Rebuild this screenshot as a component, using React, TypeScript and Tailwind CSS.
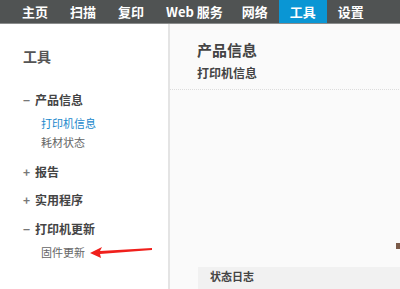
import React from 'react';

const tabs = ['主页', '扫描', '复印', 'Web 服务', '网络', '工具', '设置'];

const font = { fontFamily: '"Noto Sans CJK SC", "Noto Sans", sans-serif' };

export default function App() {
  return (
    <div className="w-[400px] h-[289px] overflow-hidden bg-white" style={font}>
      {/* top nav */}
      <div className="flex h-[24px] bg-[#505353] border-b border-[#8a8c8c] pl-[11px]">
        {tabs.map(t => (
          <div
            key={t}
            className={`flex items-center text-[13px] font-bold text-white leading-none ${
              t === 'Web 服务' ? 'pl-[11px] pr-[8px]' : 'px-[11px]'
            } ${t === '工具' ? 'bg-[#0a96d4]' : ''}`}
          >
            {t}
          </div>
        ))}
      </div>

      <div className="flex h-[265px]">
        {/* sidebar */}
        <div className="w-[170px] shrink-0 bg-white border-r-2 border-[#e4e4e4] pl-[23px] pt-[25px]">
          <div className="text-[14px] font-bold text-[#555] leading-none">工具</div>

          <div className="mt-[31px] flex items-center gap-[4px] text-[12px] font-bold text-[#444] leading-none">
            <span className="w-[8px] text-[#777]">−</span>产品信息
          </div>
          <div className="pl-[18px] mt-[12px] text-[11px] text-[#1a88cc] leading-none">打印机信息</div>
          <div className="pl-[18px] mt-[8px] text-[11px] text-[#666] leading-none">耗材状态</div>

          <div className="mt-[18px] flex items-center gap-[4px] text-[12px] font-bold text-[#444] leading-none">
            <span className="w-[8px] text-[#777]">+</span>报告
          </div>
          <div className="mt-[16px] flex items-center gap-[4px] text-[12px] font-bold text-[#444] leading-none">
            <span className="w-[8px] text-[#777]">+</span>实用程序
          </div>
          <div className="mt-[17px] flex items-center gap-[4px] text-[12px] font-bold text-[#444] leading-none">
            <span className="w-[8px] text-[#777]">−</span>打印机更新
          </div>
          <div className="pl-[18px] mt-[10px] flex items-center text-[11px] text-[#666] leading-none">
            固件更新
            <svg width="66" height="14" viewBox="0 0 66 14" className="ml-[3px]">
              <path d="M2 8 L14 2 L12 6 L64 3 L64 5 L12 9 L13 13 Z" fill="#f0201c" />
            </svg>
          </div>
        </div>

        {/* main */}
        <div className="flex-1 bg-[#fafafa] flex flex-col">
          <div className="pl-[27px] pt-[16px] pb-[8px] border-b border-dotted border-[#dcdcdc]">
            <div className="text-[15px] font-bold text-[#444] leading-[20px]">产品信息</div>
            <div className="text-[12px] font-bold text-[#444] leading-[16px] mt-[5px]">打印机信息</div>
          </div>
          <div className="flex-1 flex flex-col justify-end">
            <div className="pl-[226px] mb-[18px]">
              <div className="w-[5px] h-[6px] bg-[#7a5a48]" />
            </div>
            <div className="ml-[28px] bg-[#f1f1f1] h-[22px] pl-[12px] pt-[4px] text-[11px] font-bold text-[#444] leading-none">
              状态日志
            </div>
          </div>
        </div>
      </div>
    </div>
  );
}
